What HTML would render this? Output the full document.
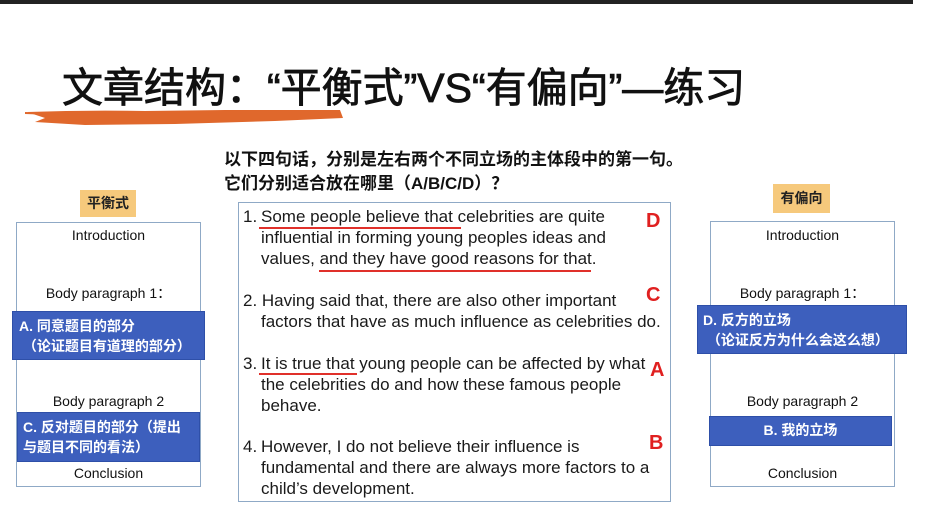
<!DOCTYPE html>
<html><head><meta charset="utf-8"><style>
*{margin:0;padding:0;box-sizing:border-box}
body{width:926px;height:512px;background:#fff;position:relative;overflow:hidden;font-family:"Liberation Sans","Noto Sans CJK SC",sans-serif;color:#111}
.a{position:absolute;white-space:nowrap}
.box{position:absolute;border:1.5px solid #8fa9c6;background:#fff}
.lbl{position:absolute;background:#f6c97c;font-size:14px;text-align:center;font-weight:bold;color:#222}
.blue{position:absolute;background:#3d5fbd;color:#fff;font-size:14px;font-weight:bold;line-height:20px;border:1px solid #2e4fa8}
.c{font-size:14px;text-align:center;position:absolute}
.t{position:absolute;font-size:17px;line-height:21px;color:#1a1a1a;white-space:nowrap}
.r{color:#e02020;font-family:"Liberation Sans",sans-serif;font-weight:bold;position:absolute;font-size:20px}
.u{position:absolute;height:2px;background:#e0302a}
</style></head><body>
<div class="a" style="left:0;top:0;width:913px;height:4px;background:#222"></div>
<div class="a" style="left:62px;top:54px;font-size:41px;font-weight:normal;color:#111;-webkit-text-stroke:0.8px #111">文章结构：“平衡式”VS“有偏向”—练习</div>
<svg class="a" style="left:25px;top:106px" width="320" height="22"><path d="M2 6 Q60 4 120 5 L200 4 L315 4 L318 12 L250 15 L150 18 L60 19 L10 16 L20 12 Z" fill="#e0682c"/><path d="M0 7 L30 8" stroke="#e0682c" stroke-width="2"/></svg>

<div class="a" style="left:224px;top:148px;font-size:17px;font-weight:bold;line-height:24px">以下四句话，分别是左右两个不同立场的主体段中的第一句。<br>它们分别适合放在哪里（A/B/C/D）？</div>

<div class="box" style="left:238px;top:202px;width:433px;height:300px"></div>
<div class="t" style="left:243px;top:206px">1.</div>
<div class="t" style="left:261px;top:206px">Some people believe that celebrities are quite<br>influential in forming young peoples ideas and<br>values, and they have good reasons for that.</div>
<div class="u" style="left:259px;top:227px;width:202px"></div>
<div class="u" style="left:319px;top:270px;width:272px"></div>
<div class="t" style="left:243px;top:290px">2. Having said that, there are also other important</div>
<div class="t" style="left:261px;top:311px">factors that have as much influence as celebrities do.</div>
<div class="t" style="left:243px;top:353px">3.</div>
<div class="t" style="left:261px;top:353px">It is true that young people can be affected by what<br>the celebrities do and how these famous people<br>behave.</div>
<div class="u" style="left:259px;top:373px;width:98px"></div>
<div class="t" style="left:243px;top:436px">4.</div>
<div class="t" style="left:261px;top:436px">However, I do not believe their influence is<br>fundamental and there are always more factors to a<br>child’s development.</div>
<div class="r" style="left:646px;top:210px">D</div>
<div class="r" style="left:646px;top:284px">C</div>
<div class="r" style="left:650px;top:359px">A</div>
<div class="r" style="left:649px;top:432px">B</div>

<div class="lbl" style="left:80px;top:190px;width:56px;height:27px;line-height:27px">平衡式</div>
<div class="box" style="left:16px;top:222px;width:185px;height:265px"></div>
<div class="c" style="left:16px;top:227px;width:185px">Introduction</div>
<div class="c" style="left:16px;top:283px;width:185px">Body paragraph 1：</div>
<div class="blue" style="left:12px;top:311px;width:193px;height:49px;padding:4px 0 0 6px">A. 同意题目的部分<br>&nbsp;（论证题目有道理的部分）</div>
<div class="c" style="left:16px;top:393px;width:185px">Body paragraph 2</div>
<div class="blue" style="left:17px;top:412px;width:183px;height:50px;padding:4px 0 0 5px">C. 反对题目的部分（提出<br>与题目不同的看法）</div>
<div class="c" style="left:16px;top:465px;width:185px">Conclusion</div>

<div class="lbl" style="left:773px;top:184px;width:57px;height:29px;line-height:29px">有偏向</div>
<div class="box" style="left:710px;top:221px;width:185px;height:266px"></div>
<div class="c" style="left:710px;top:227px;width:185px">Introduction</div>
<div class="c" style="left:710px;top:283px;width:185px">Body paragraph 1：</div>
<div class="blue" style="left:697px;top:305px;width:210px;height:49px;padding:4px 0 0 5px">D. 反方的立场<br>&nbsp;（论证反方为什么会这么想）</div>
<div class="c" style="left:710px;top:393px;width:185px">Body paragraph 2</div>
<div class="blue" style="left:709px;top:416px;width:183px;height:30px;line-height:27px;text-align:center">B. 我的立场</div>
<div class="c" style="left:710px;top:465px;width:185px">Conclusion</div>
</body></html>
